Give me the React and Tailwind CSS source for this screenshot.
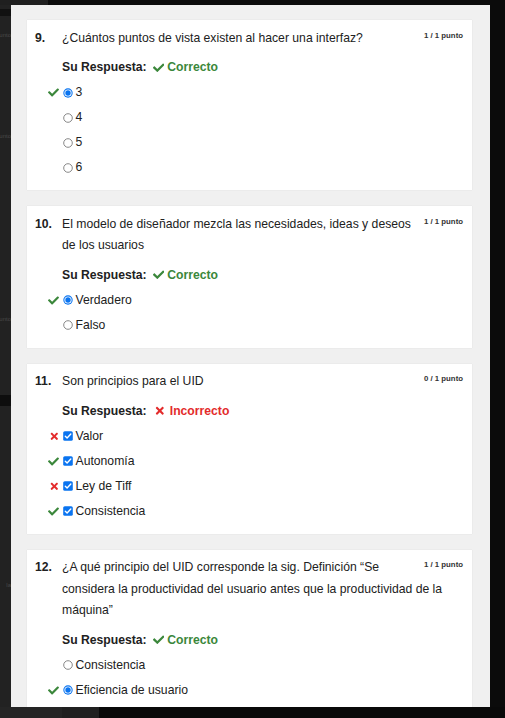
import React from "react";
import { FaCheck, FaTimes } from "react-icons/fa";

const GREEN = "#3b873b";
const RED = "#e32b2b";

function Radio({ checked }) {
  return checked ? (
    <svg width="10" height="10" viewBox="0 0 10 10" className="shrink-0">
      <circle cx="5" cy="5" r="4.7" fill="#0a74f0" />
      <circle cx="5" cy="5" r="3.6" fill="#fff" />
      <circle cx="5" cy="5" r="2.7" fill="#0a74f0" />
    </svg>
  ) : (
    <svg width="10" height="10" viewBox="0 0 10 10" className="shrink-0">
      <circle cx="5" cy="5" r="4.3" fill="#fff" stroke="#7a7a7a" strokeWidth="0.9" />
    </svg>
  );
}

function Checkbox() {
  return (
    <svg width="10" height="10" viewBox="0 0 10 10" className="shrink-0">
      <rect x="0.2" y="0.2" width="9.6" height="9.6" rx="1.6" fill="#0a74f0" />
      <path d="M2.3 5.2 L4.1 7 L7.8 3.1" fill="none" stroke="#fff" strokeWidth="1.4" strokeLinecap="round" strokeLinejoin="round" />
    </svg>
  );
}

function Option({ type, checked, mark, label }) {
  return (
    <div className="flex h-[25px] items-center pl-[21px]">
      <span className="flex w-[15px] shrink-0 items-center">
        {mark === "ok" && <FaCheck size={11} color={GREEN} />}
        {mark === "bad" && <FaTimes size={10.6} color={RED} className="ml-[1px]" />}
      </span>
      {type === "check" ? <Checkbox /> : <Radio checked={checked} />}
      <span className="ml-[2.5px]">{label}</span>
    </div>
  );
}

function Card({ num, points, title, correct, options }) {
  return (
    <div className="shrink-0 bg-white pt-[7.5px] pb-[10px] pr-[9px] shadow-[0_0_1px_rgba(0,0,0,0.12)]">
      <div className="flex pl-[8px]">
        <div className="w-[27px] shrink-0 font-bold leading-[21.5px]">{num}</div>
        <div className="flex-1 leading-[21.5px]">
          <span className="float-right ml-[8px] text-[7.8px] font-bold leading-[15px] text-[#333]">{points}</span>
          {title}
        </div>
      </div>
      <div className="mt-[6px] flex h-[25px] items-center pl-[35px] font-bold">
        <span>Su Respuesta:</span>
        {correct ? (
          <span className="ml-[6px] flex items-center" style={{ color: GREEN }}>
            <FaCheck size={11.5} />
            <span className="ml-[3px]">Correcto</span>
          </span>
        ) : (
          <span className="ml-[7.5px] flex items-center" style={{ color: RED }}>
            <FaTimes size={11.6} />
            <span className="ml-[4px]">Incorrecto</span>
          </span>
        )}
      </div>
      {options.map((o, i) => (
        <Option key={i} {...o} />
      ))}
    </div>
  );
}

export default function App() {
  return (
    <div className="flex h-[718px] w-[505px] flex-col overflow-hidden bg-[#0b0b0b] font-['Liberation_Sans',Arial,sans-serif] text-[12.2px] text-[#212121]">
      {/* top band */}
      <div className="flex h-[5px] shrink-0">
        <div className="w-[48px] bg-[#1f1f1f]" />
        <div className="flex-1 bg-[#0b0b0b]" />
      </div>
      {/* middle */}
      <div className="flex h-[702px] shrink-0">
        <div className="flex w-[11px] shrink-0 flex-col overflow-hidden bg-[#222]">
          <div className="h-[4px] shrink-0" />
          <div className="h-[7px] shrink-0 bg-[#111]" />
          <div className="mt-[14px] flex h-[10px] shrink-0 justify-end whitespace-nowrap text-[6px] leading-[10px] text-[#4a4a4a]">punto</div>
          <div className="mt-[91px] flex h-[10px] shrink-0 justify-end whitespace-nowrap text-[6px] leading-[10px] text-[#4a4a4a]">punto</div>
          <div className="mt-[173px] flex h-[10px] shrink-0 justify-end whitespace-nowrap text-[6px] leading-[10px] text-[#4a4a4a]">punto</div>
          <div className="mt-[71px] h-[11px] shrink-0 bg-[#0e0e0e]" />
          <div className="mt-[174px] flex h-[10px] shrink-0 justify-end whitespace-nowrap text-[6px] leading-[10px] text-[#4a4a4a]">la</div>
        </div>
        <div className="flex w-[479px] shrink-0 flex-col gap-[16px] overflow-hidden bg-[#f0f0f0] pt-[15px] pl-[16px] pr-[18px]">
          <Card
            num="9."
            points="1 / 1 punto"
            title="¿Cuántos puntos de vista existen al hacer una interfaz?"
            correct
            options={[
              { type: "radio", checked: true, mark: "ok", label: "3" },
              { type: "radio", label: "4" },
              { type: "radio", label: "5" },
              { type: "radio", label: "6" },
            ]}
          />
          <Card
            num="10."
            points="1 / 1 punto"
            title="El modelo de diseñador mezcla las necesidades, ideas y deseos de los usuarios"
            correct
            options={[
              { type: "radio", checked: true, mark: "ok", label: "Verdadero" },
              { type: "radio", label: "Falso" },
            ]}
          />
          <Card
            num="11."
            points="0 / 1 punto"
            title="Son principios para el UID"
            correct={false}
            options={[
              { type: "check", mark: "bad", label: "Valor" },
              { type: "check", mark: "ok", label: "Autonomía" },
              { type: "check", mark: "bad", label: "Ley de Tiff" },
              { type: "check", mark: "ok", label: "Consistencia" },
            ]}
          />
          <Card
            num="12."
            points="1 / 1 punto"
            title="¿A qué principio del UID corresponde la sig. Definición “Se considera la productividad del usuario antes que la productividad de la máquina”"
            correct
            options={[
              { type: "radio", label: "Consistencia" },
              { type: "radio", checked: true, mark: "ok", label: "Eficiencia de usuario" },
              { type: "radio", label: "Autonomía" },
            ]}
          />
        </div>
        <div className="flex-1 bg-[#0b0b0b]" />
      </div>
      {/* bottom band */}
      <div className="flex h-[11px] shrink-0">
        <div className="w-[62px] bg-[#252525]" />
        <div className="w-[37px] bg-[#202020]" />
        <div className="flex-1 bg-[#090909]" />
      </div>
    </div>
  );
}
